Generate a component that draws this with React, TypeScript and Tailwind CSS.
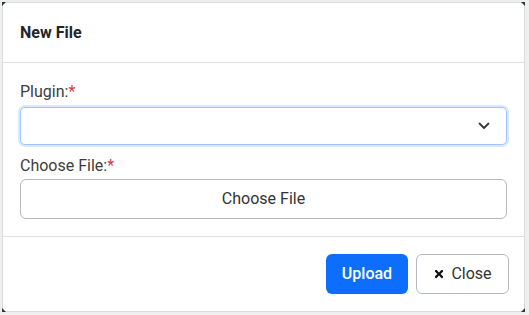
import { FaTimes } from 'react-icons/fa';

export default function App() {
  return (
    <div className="w-[529px] h-[315px] bg-[#efefef] pt-[2px] pl-[2px] font-['Roboto',sans-serif]">
      <div className="relative w-[523px] h-[310px] bg-white border border-[#dcdcdc] flex flex-col">
        {/* corner marks */}
        <div className="absolute -top-px -left-px w-0 h-0 border-t-[4px] border-r-[4px] border-t-[#2a3550] border-r-transparent" />
        <div className="absolute -top-px -right-px w-0 h-0 border-t-[4px] border-l-[4px] border-t-[#2a3550] border-l-transparent" />
        <div className="absolute -bottom-px -left-px w-0 h-0 border-b-[4px] border-r-[4px] border-b-[#2a3550] border-r-transparent" />
        <div className="absolute -bottom-px -right-px w-0 h-0 border-b-[4px] border-l-[4px] border-b-[#2a3550] border-l-transparent" />

        {/* Header */}
        <div className="h-[60px] shrink-0 border-b border-[#dee2e6] flex items-center px-[17px]">
          <h5 className="text-[16px] font-bold text-[#212529]">New File</h5>
        </div>

        {/* Body */}
        <div className="h-[173px] shrink-0 px-[17px] pt-[18px] pb-[17px] flex flex-col">
          <label className="h-[22px] leading-[22px] text-[16px] text-[#3d3d3d]">
            Plugin:<span className="text-[#dc3545]">*</span>
          </label>
          <div className="mt-[4px] h-[38px] rounded-[5px] border border-[#9ec5fe] shadow-[0_0_0_2px_rgba(13,110,253,0.15)] bg-white flex items-center justify-end pr-[16px]">
            <svg width="12" height="8" viewBox="0 0 12 8" fill="none">
              <path d="M1.5 1.5 L6 6 L10.5 1.5" stroke="#343a40" strokeWidth="1.8" strokeLinecap="round" strokeLinejoin="round" />
            </svg>
          </div>
          <label className="mt-[10px] h-[22px] leading-[22px] text-[16px] text-[#3d3d3d]">
            Choose File:<span className="text-[#dc3545]">*</span>
          </label>
          <button className="mt-[2px] h-[40px] w-[487px] rounded-[6px] border border-[#b4b9be] bg-white text-[16px] text-[#333]">
            Choose File
          </button>
        </div>

        {/* Footer */}
        <div className="h-[75px] shrink-0 border-t border-[#dee2e6] flex items-center justify-end gap-[8px] pr-[15px]">
          <button className="h-[40px] w-[82px] rounded-[6px] bg-[#0d6efd] text-white text-[16px] font-medium">
            Upload
          </button>
          <button className="h-[40px] w-[93px] rounded-[6px] border border-[#b4b9be] bg-white text-[16px] text-[#333] flex items-center justify-center gap-[6px]">
            <FaTimes className="w-[12px] h-[12px] text-[#111]" />
            <span>Close</span>
          </button>
        </div>
      </div>
    </div>
  );
}
